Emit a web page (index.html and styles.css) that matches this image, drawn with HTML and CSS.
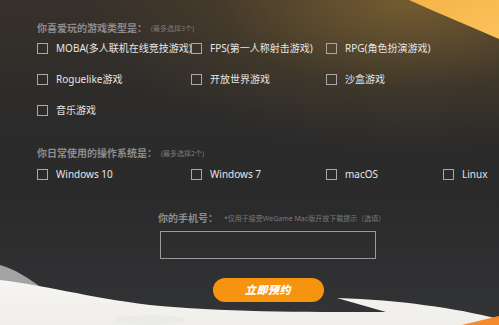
FILE: index.html
```html
<!DOCTYPE html>
<html lang="zh">
<head>
<meta charset="utf-8">
<link rel="stylesheet" href="styles.css">
</head>
<body>
<div class="page">
  <svg class="deco" viewBox="0 0 499 325" width="499" height="325" aria-hidden="true">
    <defs>
      <linearGradient id="og" x1="0" y1="0" x2="1" y2="1">
        <stop offset="0" stop-color="#f4b447"/>
        <stop offset="1" stop-color="#fbc35c"/>
      </linearGradient>
      <linearGradient id="wg" x1="0" y1="0" x2="0" y2="1">
        <stop offset="0" stop-color="#f6f5f1"/>
        <stop offset="1" stop-color="#efeeea"/>
      </linearGradient>
    </defs>
    <path d="M409,0 L499,0 L499,39 C470,26 440,14 409,0 Z" fill="url(#og)"/>
    <path d="M0,265 C14,269 28,277 44,290 L0,283 Z" fill="#a3a3a3"/>
    <path d="M0,280 C45,285 85,297 150,305 C220,312 300,312 386,312 L337,298 C400,300 455,308 499,319 L499,325 L0,325 Z" fill="url(#wg)"/>
    <ellipse cx="150" cy="320" rx="35" ry="5" fill="#e6e5e1" opacity="0.5"/>
    <path d="M462,325 C478,321 490,318 499,316 L499,325 Z" fill="#f48a2c"/>
  </svg>

  <div class="content">
    <div class="q-title">你喜爱玩的游戏类型是：<span class="hint">(最多选择3个)</span></div>
    <div class="options">
      <label class="opt"><span class="box"></span>MOBA(多人联机在线竞技游戏)</label>
      <label class="opt"><span class="box"></span>FPS(第一人称射击游戏)</label>
      <label class="opt"><span class="box"></span>RPG(角色扮演游戏)</label>
      <span></span>
      <label class="opt"><span class="box"></span>Roguelike游戏</label>
      <label class="opt"><span class="box"></span>开放世界游戏</label>
      <label class="opt"><span class="box"></span>沙盒游戏</label>
      <span></span>
      <label class="opt"><span class="box"></span>音乐游戏</label>
    </div>

    <div class="q-title os-title">你日常使用的操作系统是：<span class="hint">(最多选择2个)</span></div>
    <div class="options os">
      <label class="opt"><span class="box"></span>Windows 10</label>
      <label class="opt"><span class="box"></span>Windows 7</label>
      <label class="opt"><span class="box"></span>macOS</label>
      <label class="opt"><span class="box"></span>Linux</label>
    </div>

    <div class="phone">
      <div class="phone-title">你的手机号：<span class="hint">*仅用于接受WeGame Mac版开放下载提示（选填）</span></div>
      <div class="input"></div>
      <div class="btn">立即预约</div>
    </div>
  </div>
</div>
</body>
</html>
```

FILE: styles.css
```css
html, body {
  margin: 0;
  padding: 0;
}
body {
  width: 499px;
  height: 325px;
  overflow: hidden;
  font-family: "Noto Sans", "Noto Sans CJK SC", sans-serif;
}
.page {
  position: relative;
  width: 499px;
  height: 325px;
  overflow: hidden;
  background:
    radial-gradient(ellipse 330px 150px at 82% 0%, rgba(128, 100, 50, 0.85), rgba(90, 72, 42, 0.35) 60%, rgba(0, 0, 0, 0) 100%),
    linear-gradient(180deg, #37312b 0%, #2c2b2a 35%, #2a2a2b 60%, #333436 100%);
}
.deco {
  position: absolute;
  left: 0;
  top: 0;
}
.content {
  position: relative;
  padding: 21px 0 0 37px;
}
.q-title {
  font-size: 10px;
  line-height: 14px;
  height: 14px;
  color: #8d8d8d;
  font-weight: 700;
  white-space: nowrap;
}
.hint {
  font-size: 7px;
  font-weight: 400;
  color: #7a7a7a;
  margin-left: 4px;
  vertical-align: 1px;
}
.options {
  display: grid;
  grid-template-columns: 154px 135px 117px auto;
  grid-auto-rows: 14px;
  row-gap: 17px;
  margin-top: 6px;
}
.opt {
  display: flex;
  align-items: center;
  gap: 8px;
  font-size: 10px;
  line-height: 14px;
  color: #e6e6e6;
  white-space: nowrap;
}
.box {
  width: 9px;
  height: 9px;
  border: 1px solid #a8a8a8;
  flex: none;
}
.os-title {
  margin-top: 29px;
}
.os {
  margin-top: 7px;
}
.phone {
  width: 216px;
  margin: 30px 0 0 123px;
  display: flex;
  flex-direction: column;
  align-items: center;
}
.phone-title {
  align-self: flex-start;
  margin-left: -2px;
  font-size: 10px;
  line-height: 14px;
  font-weight: 700;
  color: #8d8d8d;
  white-space: nowrap;
}
.phone-title .hint {
  margin-left: 6px;
}
.input {
  align-self: stretch;
  margin-top: 5px;
  height: 26px;
  border: 1px solid #9a9a9a;
}
.btn {
  margin-top: 19px;
  width: 111px;
  height: 24px;
  border-radius: 12px;
  background: #f7940f;
  color: #ffffff;
  font-size: 11px;
  font-weight: 900;
  font-style: italic;
  letter-spacing: 0.5px;
  line-height: 24px;
  text-align: center;
}
```
